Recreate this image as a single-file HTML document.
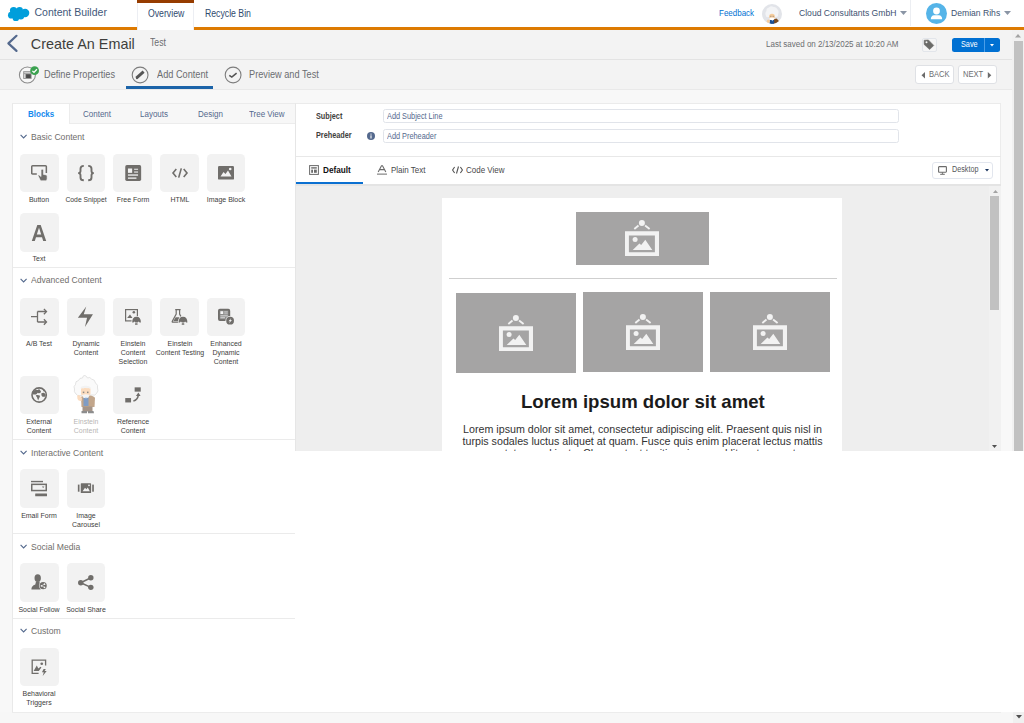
<!DOCTYPE html>
<html><head><meta charset="utf-8"><style>
html,body{margin:0;padding:0;}
body{width:1024px;height:723px;overflow:hidden;position:relative;background:#f8f8f8;font-family:"Liberation Sans", sans-serif;}
div,svg{font-family:"Liberation Sans", sans-serif;}
</style></head><body>
<div style="position:absolute;left:0px;top:0px;width:1024px;height:27px;background:#fff"></div>
<div style="position:absolute;left:0px;top:27px;width:1024px;height:3px;background:#dd7a01"></div>
<svg style="position:absolute;left:0px;top:0px;overflow:visible;" width="40" height="28" viewBox="0 0 40 28"><g fill="#009edb"><circle cx="13.6" cy="10.6" r="3.7"/><circle cx="19.6" cy="10.3" r="3.3"/><circle cx="25.1" cy="13" r="4.2"/><circle cx="11.4" cy="15.2" r="3.4"/><circle cx="15.9" cy="17.9" r="3.2"/><circle cx="20.8" cy="15.8" r="3.6"/><rect x="12" y="11" width="13" height="6"/></g></svg>
<div style="position:absolute;left:34.50px;top:6.00px;font-size:10.5px;line-height:12.6px;color:#3f587a;font-weight:400;white-space:nowrap;transform-origin:0 0;">Content Builder</div>
<div style="position:absolute;left:137px;top:0px;width:57px;height:30px;background:#fff;border-left:1px solid #eceef3;border-right:1px solid #eceef3;box-sizing:border-box"></div>
<div style="position:absolute;left:137px;top:0px;width:57px;height:2.6px;background:#963c00"></div>
<div style="position:absolute;left:148.00px;top:8.00px;font-size:10.0px;line-height:12.0px;color:#2f4a6e;font-weight:400;white-space:nowrap;transform:scaleX(0.87);transform-origin:0 0;">Overview</div>
<div style="position:absolute;left:204.50px;top:8.00px;font-size:10.0px;line-height:12.0px;color:#2f4a6e;font-weight:400;white-space:nowrap;transform:scaleX(0.87);transform-origin:0 0;">Recycle Bin</div>
<div style="position:absolute;left:719.00px;top:8.00px;font-size:9.195px;line-height:11.034px;color:#0070d2;font-weight:400;white-space:nowrap;transform:scaleX(0.87);transform-origin:0 0;">Feedback</div>
<svg style="position:absolute;left:762px;top:3.5px;overflow:visible;" width="20" height="20" viewBox="0 0 20 20"><defs><clipPath id="ec"><circle cx="10" cy="10" r="10"/></clipPath></defs>
<circle cx="10" cy="10" r="10" fill="#e2e4e9"/>
<g clip-path="url(#ec)">
<path d="M4 12 Q2.5 9 4.5 7 Q4 4 7 3.5 Q9 1.5 11.5 3 Q14.5 2.5 15.5 5.5 Q17.5 7.5 16 10.5 Q16.5 13 14 13 L6 13 Q4 13.5 4 12Z" fill="#f3f4f6"/>
<path d="M11 15.5 L14.5 14.5 Q17 16 17.5 19 L16 21 L11 21Z" fill="#7b4a20"/>
<path d="M7.5 21 L7.8 16 L12 15.5 L12.3 21Z" fill="#1d4f91"/>
<path d="M9.8 16 L10.4 17.5 L11 16Z" fill="#9cc3ec"/>
<ellipse cx="10" cy="12.6" rx="2.9" ry="2.9" fill="#f6cc9c"/>
<path d="M7.4 14 Q10 13 12.6 14 L12 15.8 Q10 16.5 8 15.8Z" fill="#ffffff"/>
<rect x="8.4" y="11.8" width="0.9" height="0.9" fill="#6d6d6d"/><rect x="10.7" y="11.8" width="0.9" height="0.9" fill="#6d6d6d"/>
<ellipse cx="6.3" cy="17.3" rx="1.5" ry="1.8" fill="#f6cc9c"/>
</g></svg>
<div style="position:absolute;left:798.70px;top:7.00px;font-size:9.885px;line-height:11.862px;color:#3d5170;font-weight:400;white-space:nowrap;transform:scaleX(0.87);transform-origin:0 0;">Cloud Consultants GmbH</div>
<svg style="position:absolute;left:900px;top:11px;overflow:visible;" width="7" height="4" viewBox="0 0 7 4"><path d="M0 0 L7 0 L3.5 4Z" fill="#8a95a5"/></svg>
<div style="position:absolute;left:910px;top:0px;width:1px;height:26px;background:#eceef2"></div>
<svg style="position:absolute;left:926px;top:3px;overflow:visible;" width="21" height="21" viewBox="0 0 21 21"><circle cx="10.5" cy="10.5" r="10.5" fill="#55b4e8"/><circle cx="10.5" cy="8" r="3.4" fill="#fff"/><path d="M4.8 16.2 Q5 12.5 8 12.2 L13 12.2 Q16 12.5 16.2 16.2 Z" fill="#fff"/></svg>
<div style="position:absolute;left:950.60px;top:7.00px;font-size:9.885px;line-height:11.862px;color:#3d5170;font-weight:400;white-space:nowrap;transform:scaleX(0.87);transform-origin:0 0;">Demian Rihs</div>
<svg style="position:absolute;left:1003.5px;top:11px;overflow:visible;" width="7" height="4" viewBox="0 0 7 4"><path d="M0 0 L7 0 L3.5 4Z" fill="#8a95a5"/></svg>
<div style="position:absolute;left:0px;top:30px;width:1012px;height:29px;background:#f3f3f3"></div>
<div style="position:absolute;left:0px;top:59px;width:1013.5px;height:1px;background:#e3e3e3"></div>
<svg style="position:absolute;left:7px;top:35px;overflow:visible;" width="12" height="18" viewBox="0 0 12 18"><path d="M9.5 0.8 L1.4 8.4 L9.5 15.9" fill="none" stroke="#54698d" stroke-width="2.2" stroke-linecap="round" stroke-linejoin="round"/></svg>
<div style="position:absolute;left:30.80px;top:36.00px;font-size:14.4px;line-height:17.28px;color:#3e3e3c;font-weight:400;white-space:nowrap;transform-origin:0 0;">Create An Email</div>
<div style="position:absolute;left:150.30px;top:37.00px;font-size:10.0px;line-height:12.0px;color:#6b6d70;font-weight:400;white-space:nowrap;transform:scaleX(0.87);transform-origin:0 0;">Test</div>
<div style="position:absolute;left:765.50px;top:39.00px;font-size:9.195px;line-height:11.034px;color:#6b6d70;font-weight:400;white-space:nowrap;transform:scaleX(0.87);transform-origin:0 0;">Last saved on 2/13/2025 at 10:20 AM</div>
<div style="position:absolute;left:922px;top:38px;width:14.5px;height:13.8px;background:#f5f5f5;border:1px solid #e2e5ea;border-radius:2px;box-sizing:border-box"></div>
<svg style="position:absolute;left:923px;top:39px;overflow:visible;" width="12" height="12" viewBox="0 0 12 12"><path d="M1.1 1.2 L5.4 0.9 L10.8 6.4 L6.6 10.6 L1.1 5.4 Z" fill="#6b6b68" stroke="#6b6b68" stroke-width="0.5" stroke-linejoin="round"/><circle cx="3.5" cy="3.3" r="1" fill="#f5f5f5"/></svg>
<div style="position:absolute;left:951.5px;top:37.9px;width:48px;height:13.8px;background:#0070d2;border-radius:2.5px"></div>
<div style="position:absolute;left:984.3px;top:37.9px;width:0.8px;height:13.8px;background:#4a9ee8"></div>
<div style="position:absolute;left:960.50px;top:39.00px;font-size:8.391px;line-height:10.069px;color:#fff;font-weight:400;white-space:nowrap;transform:scaleX(0.87);transform-origin:0 0;">Save</div>
<svg style="position:absolute;left:990.3px;top:44px;overflow:visible;" width="4" height="2.4" viewBox="0 0 4 2.4"><path d="M0 0 L4 0 L2 2.4Z" fill="#fff"/></svg>
<div style="position:absolute;left:0px;top:60px;width:1012px;height:29px;background:#f3f3f3"></div>
<div style="position:absolute;left:0px;top:88.8px;width:1013.5px;height:1.4px;background:#e9e9e9"></div>
<svg style="position:absolute;left:18px;top:66px;overflow:visible;" width="19" height="19" viewBox="0 0 19 19"><circle cx="9.4" cy="9" r="8" fill="#f7f7f7" stroke="#8c8c8c" stroke-width="1.1"/><rect x="5.2" y="5.2" width="8.4" height="7.7" fill="#8f8f8f"/><rect x="6.2" y="6.3" width="6.4" height="1" fill="#e6e6e6"/><rect x="6.2" y="8.1" width="1.1" height="3.9" fill="#e6e6e6"/><rect x="8.1" y="8.3" width="4.6" height="3.7" fill="#4a4a4a"/></svg>
<svg style="position:absolute;left:30px;top:66px;overflow:visible;" width="10" height="10" viewBox="0 0 10 10"><circle cx="4.6" cy="4.7" r="4.4" fill="#3ba250"/><path d="M2.4 4.9 L4 6.4 L6.9 3.3" fill="none" stroke="#fff" stroke-width="1.3"/></svg>
<div style="position:absolute;left:43.80px;top:68.00px;font-size:10.575px;line-height:12.69px;color:#6b6d70;font-weight:400;white-space:nowrap;transform:scaleX(0.87);transform-origin:0 0;">Define Properties</div>
<svg style="position:absolute;left:131px;top:66px;overflow:visible;" width="18" height="18" viewBox="0 0 18 18"><circle cx="9.1" cy="9" r="7.9" fill="none" stroke="#7d7d7d" stroke-width="1.1"/><path d="M5.3 12.2 L12.6 5.6" stroke="#555" stroke-width="3" /><path d="M4.9 13.2 L5.3 11.4 L6.6 12.7Z" fill="#555"/></svg>
<div style="position:absolute;left:156.50px;top:68.00px;font-size:10.575px;line-height:12.69px;color:#6b6d70;font-weight:400;white-space:nowrap;transform:scaleX(0.87);transform-origin:0 0;">Add Content</div>
<div style="position:absolute;left:126px;top:86px;width:87px;height:3px;background:#1b63a8"></div>
<svg style="position:absolute;left:224px;top:66px;overflow:visible;" width="18" height="18" viewBox="0 0 18 18"><circle cx="9.1" cy="9" r="7.9" fill="none" stroke="#7d7d7d" stroke-width="1.1"/><path d="M5.3 9.3 L7.8 11.1 L12.6 7.1" fill="none" stroke="#555" stroke-width="1.6"/></svg>
<div style="position:absolute;left:249.20px;top:68.00px;font-size:10.575px;line-height:12.69px;color:#6b6d70;font-weight:400;white-space:nowrap;transform:scaleX(0.87);transform-origin:0 0;">Preview and Test</div>
<div style="position:absolute;left:914.5px;top:65.3px;width:39px;height:18.8px;background:#fff;border:1px solid #dfe1e5;border-radius:3px;box-sizing:border-box"></div>
<svg style="position:absolute;left:921px;top:71.5px;overflow:visible;" width="5" height="7" viewBox="0 0 5 7"><path d="M4 0 L4 6.5 L0.5 3.25Z" fill="#6b6b6b"/></svg>
<div style="position:absolute;left:929.00px;top:69.00px;font-size:8.736px;line-height:10.483px;color:#6b6d70;font-weight:400;white-space:nowrap;transform:scaleX(0.87);transform-origin:0 0;">BACK</div>
<div style="position:absolute;left:958px;top:65.3px;width:38.6px;height:18.8px;background:#fff;border:1px solid #dfe1e5;border-radius:3px;box-sizing:border-box"></div>
<div style="position:absolute;left:962.70px;top:69.00px;font-size:8.736px;line-height:10.483px;color:#6b6d70;font-weight:400;white-space:nowrap;transform:scaleX(0.87);transform-origin:0 0;">NEXT</div>
<svg style="position:absolute;left:986.5px;top:71.5px;overflow:visible;" width="5" height="7" viewBox="0 0 5 7"><path d="M0.8 0 L0.8 6.5 L4.3 3.25Z" fill="#6b6b6b"/></svg>
<div style="position:absolute;left:0px;top:90px;width:1012px;height:633px;background:#f8f8f8"></div>
<div style="position:absolute;left:1012px;top:30px;width:12px;height:421px;background:#f1f1f1"></div>
<div style="position:absolute;left:1014px;top:41px;width:8.8px;height:409.5px;background:#c1c1c1"></div>
<svg style="position:absolute;left:1015px;top:34px;overflow:visible;" width="6" height="4" viewBox="0 0 6 4"><path d="M0 3.5 L6 3.5 L3 0Z" fill="#a3a3a3"/></svg>
<div style="position:absolute;left:12px;top:103px;width:284px;height:609px;background:#fff;border-left:1px solid #e9e9e9;border-top:1px solid #ebebeb;box-sizing:border-box"></div>
<div style="position:absolute;left:68.5px;top:104px;width:226.5px;height:19.6px;background:#f7f7f7;border-left:1px solid #ececec;border-bottom:1px solid #ececec;box-sizing:border-box"></div>
<div style="position:absolute;left:27.80px;top:109.00px;font-size:9.195px;line-height:11.034px;color:#1589ee;font-weight:700;white-space:nowrap;transform:scaleX(0.87);transform-origin:0 0;">Blocks</div>
<div style="position:absolute;left:83.00px;top:109.00px;font-size:9.195px;line-height:11.034px;color:#54698d;font-weight:400;white-space:nowrap;transform:scaleX(0.87);transform-origin:0 0;">Content</div>
<div style="position:absolute;left:139.70px;top:109.00px;font-size:9.195px;line-height:11.034px;color:#54698d;font-weight:400;white-space:nowrap;transform:scaleX(0.87);transform-origin:0 0;">Layouts</div>
<div style="position:absolute;left:197.80px;top:109.00px;font-size:9.195px;line-height:11.034px;color:#54698d;font-weight:400;white-space:nowrap;transform:scaleX(0.87);transform-origin:0 0;">Design</div>
<div style="position:absolute;left:249.40px;top:109.00px;font-size:9.195px;line-height:11.034px;color:#54698d;font-weight:400;white-space:nowrap;transform:scaleX(0.87);transform-origin:0 0;">Tree View</div>
<svg style="position:absolute;left:19.7px;top:134.3px;overflow:visible;" width="8" height="6" viewBox="0 0 8 6"><path d="M0.6 0.8 L3.6 4 L6.6 0.8" fill="none" stroke="#54698d" stroke-width="1.1"/></svg>
<div style="position:absolute;left:31.00px;top:131.00px;font-size:9.885px;line-height:11.862px;color:#706e6b;font-weight:400;white-space:nowrap;transform:scaleX(0.87);transform-origin:0 0;">Basic Content</div>
<div style="position:absolute;left:20px;top:153.6px;width:38.7px;height:38.7px;background:#f2f2f2;border-radius:4.5px"></div>
<svg style="position:absolute;left:31.35px;top:164.95px;overflow:visible;" width="16" height="16" viewBox="0 0 16 16"><path d="M5.8 9.05 L1.6 9.05 Q0.75 9.05 0.75 8.2 L0.75 1.6 Q0.75 0.85 1.6 0.85 L14.5 0.85 Q15.35 0.85 15.35 1.6 L15.35 8" fill="none" stroke="#706e6b" stroke-width="1.5"/><path d="M10.05 5.4 Q10.05 4.2 11.25 4.2 Q12.45 4.2 12.45 5.4 L12.45 9.4 L15.2 9.9 Q16.1 10.1 16.1 11 L16.1 14 Q16 15.75 14.6 15.75 L10.2 15.75 Q9.5 15.75 9.2 15 L7 10.6 Q6.9 10 7.6 10 Q8.6 10.2 10.05 11.6 Z" fill="#706e6b" stroke="#f2f2f2" stroke-width="0.6"/></svg>
<div style="position:absolute;left:-5.65px;top:195.00px;width:90px;text-align:center;font-size:8.046px;line-height:9.655px;color:#3e3e3c;font-weight:400;white-space:nowrap;transform:scaleX(0.87);transform-origin:50% 0;">Button</div>
<div style="position:absolute;left:66.8px;top:153.6px;width:38.7px;height:38.7px;background:#f2f2f2;border-radius:4.5px"></div>
<svg style="position:absolute;left:78.15px;top:164.95px;overflow:visible;" width="16" height="16" viewBox="0 0 16 16"><path d="M5.8 0.9 Q2.5 0.9 2.5 3.8 L2.5 5.9 Q2.5 8 0.2 8.1 Q2.5 8.2 2.5 10.3 L2.5 12.4 Q2.5 15.3 5.8 15.3" fill="none" stroke="#706e6b" stroke-width="1.9"/><path d="M10.2 0.9 Q13.5 0.9 13.5 3.8 L13.5 5.9 Q13.5 8 15.8 8.1 Q13.5 8.2 13.5 10.3 L13.5 12.4 Q13.5 15.3 10.2 15.3" fill="none" stroke="#706e6b" stroke-width="1.9"/></svg>
<div style="position:absolute;left:41.15px;top:195.00px;width:90px;text-align:center;font-size:7.816px;line-height:9.379px;color:#3e3e3c;font-weight:400;white-space:nowrap;transform:scaleX(0.87);transform-origin:50% 0;">Code Snippet</div>
<div style="position:absolute;left:113.4px;top:153.6px;width:38.7px;height:38.7px;background:#f2f2f2;border-radius:4.5px"></div>
<svg style="position:absolute;left:124.75px;top:164.95px;overflow:visible;" width="16" height="16" viewBox="0 0 16 16"><rect x="0.25" y="0.05" width="15.9" height="15.9" rx="1.6" fill="#706e6b"/><rect x="2.95" y="3.5" width="4.2" height="4.35" fill="#f2f2f2"/><rect x="9.1" y="3.7" width="3.95" height="1.2" fill="#dcdcdc"/><rect x="9.1" y="6.4" width="3.95" height="1.3" fill="#dcdcdc"/><rect x="2.95" y="9.25" width="10.1" height="1.6" fill="#dcdcdc"/><rect x="2.95" y="12.35" width="8.5" height="1.6" fill="#dcdcdc"/></svg>
<div style="position:absolute;left:87.75px;top:195.00px;width:90px;text-align:center;font-size:8.046px;line-height:9.655px;color:#3e3e3c;font-weight:400;white-space:nowrap;transform:scaleX(0.87);transform-origin:50% 0;">Free Form</div>
<div style="position:absolute;left:160.2px;top:153.6px;width:38.7px;height:38.7px;background:#f2f2f2;border-radius:4.5px"></div>
<svg style="position:absolute;left:171.55px;top:164.95px;overflow:visible;" width="16" height="16" viewBox="0 0 16 16"><path d="M4.3 4 L1 8 L4.3 12" fill="none" stroke="#706e6b" stroke-width="1.6"/><path d="M11.7 4 L15 8 L11.7 12" fill="none" stroke="#706e6b" stroke-width="1.6"/><path d="M9.3 3.4 L6.7 12.6" fill="none" stroke="#706e6b" stroke-width="1.6"/></svg>
<div style="position:absolute;left:134.55px;top:195.00px;width:90px;text-align:center;font-size:8.046px;line-height:9.655px;color:#3e3e3c;font-weight:400;white-space:nowrap;transform:scaleX(0.87);transform-origin:50% 0;">HTML</div>
<div style="position:absolute;left:206.6px;top:153.6px;width:38.7px;height:38.7px;background:#f2f2f2;border-radius:4.5px"></div>
<svg style="position:absolute;left:217.95px;top:164.95px;overflow:visible;" width="16" height="16" viewBox="0 0 16 16"><rect x="0" y="1" width="16" height="13.6" rx="1.2" fill="#706e6b"/><path d="M2.5 11.5 L5.5 7 L7.5 9 L10 5.5 L13.5 11.5 Z" fill="#f2f2f2"/><circle cx="12.2" cy="4" r="1.3" fill="#f2f2f2"/></svg>
<div style="position:absolute;left:180.95px;top:195.00px;width:90px;text-align:center;font-size:8.046px;line-height:9.655px;color:#3e3e3c;font-weight:400;white-space:nowrap;transform:scaleX(0.87);transform-origin:50% 0;">Image Block</div>
<div style="position:absolute;left:20px;top:213.2px;width:38.7px;height:38.7px;background:#f2f2f2;border-radius:4.5px"></div>
<svg style="position:absolute;left:31.35px;top:224.55px;overflow:visible;" width="16" height="16" viewBox="0 0 16 16"><path d="M0.8 16 L6.3 0 L9.7 0 L15.2 16 L12.2 16 L11 12.3 L5 12.3 L3.8 16 Z M5.8 9.6 L10.2 9.6 L8 2.8 Z" fill="#706e6b" fill-rule="evenodd"/></svg>
<div style="position:absolute;left:-5.65px;top:254.00px;width:90px;text-align:center;font-size:8.046px;line-height:9.655px;color:#3e3e3c;font-weight:400;white-space:nowrap;transform:scaleX(0.87);transform-origin:50% 0;">Text</div>
<div style="position:absolute;left:13px;top:267.0px;width:282px;height:1px;background:#ebebeb"></div>
<svg style="position:absolute;left:19.7px;top:277.7px;overflow:visible;" width="8" height="6" viewBox="0 0 8 6"><path d="M0.6 0.8 L3.6 4 L6.6 0.8" fill="none" stroke="#54698d" stroke-width="1.1"/></svg>
<div style="position:absolute;left:31.00px;top:274.00px;font-size:9.885px;line-height:11.862px;color:#706e6b;font-weight:400;white-space:nowrap;transform:scaleX(0.87);transform-origin:0 0;">Advanced Content</div>
<div style="position:absolute;left:20px;top:297.5px;width:38.7px;height:38.7px;background:#f2f2f2;border-radius:4.5px"></div>
<svg style="position:absolute;left:31.35px;top:308.85px;overflow:visible;" width="16" height="16" viewBox="0 0 16 16"><path d="M0 7.7 L6.5 7.7 M6.5 2.5 L6.5 13 M6.5 2.5 L15 2.5 M6.5 13 L15 13" fill="none" stroke="#706e6b" stroke-width="1.3"/><path d="M12.9 0 L15.5 2.5 L12.9 5.3 M12.9 10.3 L15.5 13 L12.9 15.8" fill="none" stroke="#706e6b" stroke-width="1.3"/></svg>
<div style="position:absolute;left:-5.65px;top:339.00px;width:90px;text-align:center;font-size:8.046px;line-height:9.655px;color:#3e3e3c;font-weight:400;white-space:nowrap;transform:scaleX(0.87);transform-origin:50% 0;">A/B Test</div>
<div style="position:absolute;left:66.8px;top:297.5px;width:38.7px;height:38.7px;background:#f2f2f2;border-radius:4.5px"></div>
<svg style="position:absolute;left:78.15px;top:308.85px;overflow:visible;" width="16" height="16" viewBox="0 0 16 16"><path d="M8.25 -2.45 L5.75 5.35 L14.95 5.35 L6.95 17.95 L9.05 8.75 L-0.15 8.75 Z" fill="#706e6b"/></svg>
<div style="position:absolute;left:41.15px;top:339.00px;width:90px;text-align:center;font-size:8.046px;line-height:9.655px;color:#3e3e3c;font-weight:400;white-space:nowrap;transform:scaleX(0.87);transform-origin:50% 0;">Dynamic</div>
<div style="position:absolute;left:41.15px;top:348.00px;width:90px;text-align:center;font-size:8.046px;line-height:9.655px;color:#3e3e3c;font-weight:400;white-space:nowrap;transform:scaleX(0.87);transform-origin:50% 0;">Content</div>
<div style="position:absolute;left:113.4px;top:297.5px;width:38.7px;height:38.7px;background:#f2f2f2;border-radius:4.5px"></div>
<svg style="position:absolute;left:124.75px;top:308.85px;overflow:visible;" width="16" height="16" viewBox="0 0 16 16"><rect x="0.6" y="0.6" width="11.8" height="11.3" fill="none" stroke="#706e6b" stroke-width="1.2"/><path d="M2.1 9 L5 5.4 L7.5 9Z" fill="#706e6b"/><circle cx="8.85" cy="3.3" r="1.3" fill="#706e6b"/><path d="M6.4 13.8 Q6.4 7 11.6 7 Q16.6 7 16.6 13.8Z" fill="#f2f2f2"/><path d="M7.2 13.6 Q7.2 7.8 11.5 7.8 Q15.9 7.8 15.9 13.6 L14.6 13.6 L13.6 12.6 L12.6 13.6 L10.4 13.6 L9.4 12.6 L8.4 13.6Z" fill="#706e6b"/><rect x="10" y="14.2" width="2.6" height="1.5" rx="0.5" fill="#706e6b"/></svg>
<div style="position:absolute;left:87.75px;top:339.00px;width:90px;text-align:center;font-size:8.046px;line-height:9.655px;color:#3e3e3c;font-weight:400;white-space:nowrap;transform:scaleX(0.87);transform-origin:50% 0;">Einstein</div>
<div style="position:absolute;left:87.75px;top:348.00px;width:90px;text-align:center;font-size:8.046px;line-height:9.655px;color:#3e3e3c;font-weight:400;white-space:nowrap;transform:scaleX(0.87);transform-origin:50% 0;">Content</div>
<div style="position:absolute;left:87.75px;top:357.00px;width:90px;text-align:center;font-size:8.046px;line-height:9.655px;color:#3e3e3c;font-weight:400;white-space:nowrap;transform:scaleX(0.87);transform-origin:50% 0;">Selection</div>
<div style="position:absolute;left:160.2px;top:297.5px;width:38.7px;height:38.7px;background:#f2f2f2;border-radius:4.5px"></div>
<svg style="position:absolute;left:171.55px;top:308.85px;overflow:visible;" width="16" height="16" viewBox="0 0 16 16"><path d="M3.2 0.6 L8.6 0.6 M4.2 0.6 L4.2 5 L0.3 12.2 Q-0.2 13.2 0.9 13.2 L6.5 13.2 M7.6 0.6 L7.6 5 L9 7.6" fill="none" stroke="#706e6b" stroke-width="1.2"/><path d="M1.4 12 L3.6 8.2 L7.6 8.2 L6.6 12Z" fill="#706e6b"/><path d="M5.9 13.8 Q5.9 7 11 7 Q16.1 7 16.1 13.8Z" fill="#f2f2f2"/><path d="M6.6 13.6 Q6.6 7.8 11 7.8 Q15.4 7.8 15.4 13.6 L14.1 13.6 L13.1 12.6 L12.1 13.6 L9.9 13.6 L8.9 12.6 L7.9 13.6Z" fill="#706e6b"/><rect x="9.7" y="14.2" width="2.6" height="1.5" rx="0.5" fill="#706e6b"/></svg>
<div style="position:absolute;left:134.55px;top:339.00px;width:90px;text-align:center;font-size:8.046px;line-height:9.655px;color:#3e3e3c;font-weight:400;white-space:nowrap;transform:scaleX(0.87);transform-origin:50% 0;">Einstein</div>
<div style="position:absolute;left:134.55px;top:348.00px;width:90px;text-align:center;font-size:8.046px;line-height:9.655px;color:#3e3e3c;font-weight:400;white-space:nowrap;transform:scaleX(0.87);transform-origin:50% 0;">Content Testing</div>
<div style="position:absolute;left:206.6px;top:297.5px;width:38.7px;height:38.7px;background:#f2f2f2;border-radius:4.5px"></div>
<svg style="position:absolute;left:217.95px;top:308.85px;overflow:visible;" width="16" height="16" viewBox="0 0 16 16"><rect x="0.9" y="0.7" width="10.4" height="10.4" rx="1" fill="#8c8c8a" stroke="#706e6b" stroke-width="1.8"/><rect x="2.4" y="2.2" width="2.8" height="2.8" fill="#f6f6f6"/><rect x="6.2" y="2.4" width="3.6" height="1.1" fill="#cfcfcf"/><rect x="6.2" y="4.2" width="3.6" height="1.1" fill="#bdbdbd"/><rect x="2.4" y="6.3" width="7.4" height="1.1" fill="#d6d6d6"/><rect x="2.4" y="8.2" width="4.6" height="1.1" fill="#d6d6d6"/><circle cx="12.1" cy="11.7" r="4.7" fill="#f2f2f2"/><circle cx="12.1" cy="11.7" r="3.9" fill="#706e6b"/><path d="M13.3 9 L10.5 12.3 L12 12.3 L11 14.6 L13.9 11.1 L12.4 11.1Z" fill="#f2f2f2"/></svg>
<div style="position:absolute;left:180.95px;top:339.00px;width:90px;text-align:center;font-size:8.046px;line-height:9.655px;color:#3e3e3c;font-weight:400;white-space:nowrap;transform:scaleX(0.87);transform-origin:50% 0;">Enhanced</div>
<div style="position:absolute;left:180.95px;top:348.00px;width:90px;text-align:center;font-size:8.046px;line-height:9.655px;color:#3e3e3c;font-weight:400;white-space:nowrap;transform:scaleX(0.87);transform-origin:50% 0;">Dynamic</div>
<div style="position:absolute;left:180.95px;top:357.00px;width:90px;text-align:center;font-size:8.046px;line-height:9.655px;color:#3e3e3c;font-weight:400;white-space:nowrap;transform:scaleX(0.87);transform-origin:50% 0;">Content</div>
<div style="position:absolute;left:20px;top:375.5px;width:38.7px;height:38.7px;background:#f2f2f2;border-radius:4.5px"></div>
<svg style="position:absolute;left:31.35px;top:386.85px;overflow:visible;" width="16" height="16" viewBox="0 0 16 16"><circle cx="8.15" cy="8" r="7.15" fill="none" stroke="#706e6b" stroke-width="1.6"/><g fill="#706e6b"><path d="M1.3 7.2 L1.5 4.6 Q2.6 3.1 4.5 3 L7.4 2.9 L7.6 1.4 L9.2 3.2 L10 4.6 L9.3 6.1 L7.6 6.3 L6.7 5.7 Q5.9 7.1 5 7.4 Q3 7.5 1.3 7.2Z"/><path d="M4.8 8.3 Q7 7.8 8.8 8.6 Q9.3 10 8.2 11 Q7.6 12.2 7.2 13.4 Q6.3 11.6 6 10.3 Q5 9.5 4.8 8.3Z"/><path d="M10.2 6.4 Q11.8 5.5 13.4 5.9 L14.8 8 L13.8 9.7 Q12 9.9 11.2 9.5 Q10.4 8.1 10.2 6.4Z"/><path d="M11.5 2.2 L13.6 3.6 L12.6 4.4 Z"/></g></svg>
<div style="position:absolute;left:-5.65px;top:417.00px;width:90px;text-align:center;font-size:8.046px;line-height:9.655px;color:#3e3e3c;font-weight:400;white-space:nowrap;transform:scaleX(0.87);transform-origin:50% 0;">External</div>
<div style="position:absolute;left:-5.65px;top:426.00px;width:90px;text-align:center;font-size:8.046px;line-height:9.655px;color:#3e3e3c;font-weight:400;white-space:nowrap;transform:scaleX(0.87);transform-origin:50% 0;">Content</div>
<div style="position:absolute;left:41.15px;top:417.00px;width:90px;text-align:center;font-size:8.046px;line-height:9.655px;color:#b8b6b4;font-weight:400;white-space:nowrap;transform:scaleX(0.87);transform-origin:50% 0;">Einstein</div>
<div style="position:absolute;left:41.15px;top:426.00px;width:90px;text-align:center;font-size:8.046px;line-height:9.655px;color:#b8b6b4;font-weight:400;white-space:nowrap;transform:scaleX(0.87);transform-origin:50% 0;">Content</div>
<div style="position:absolute;left:113.4px;top:375.5px;width:38.7px;height:38.7px;background:#f2f2f2;border-radius:4.5px"></div>
<svg style="position:absolute;left:124.75px;top:386.85px;overflow:visible;" width="16" height="16" viewBox="0 0 16 16"><rect x="0.25" y="11.05" width="5.8" height="4.4" fill="#706e6b"/><rect x="9.65" y="0.35" width="6.1" height="4.3" fill="#706e6b"/><path d="M8.4 14 Q12.6 13 13.3 8.4" fill="none" stroke="#706e6b" stroke-width="1.5"/><path d="M10.9 8.9 L13.4 5.6 L15.6 8.9Z" fill="#706e6b"/></svg>
<div style="position:absolute;left:87.75px;top:417.00px;width:90px;text-align:center;font-size:8.046px;line-height:9.655px;color:#3e3e3c;font-weight:400;white-space:nowrap;transform:scaleX(0.87);transform-origin:50% 0;">Reference</div>
<div style="position:absolute;left:87.75px;top:426.00px;width:90px;text-align:center;font-size:8.046px;line-height:9.655px;color:#3e3e3c;font-weight:400;white-space:nowrap;transform:scaleX(0.87);transform-origin:50% 0;">Content</div>
<div style="position:absolute;left:13px;top:439.1px;width:282px;height:1px;background:#ebebeb"></div>
<svg style="position:absolute;left:19.7px;top:450.09999999999997px;overflow:visible;" width="8" height="6" viewBox="0 0 8 6"><path d="M0.6 0.8 L3.6 4 L6.6 0.8" fill="none" stroke="#54698d" stroke-width="1.1"/></svg>
<div style="position:absolute;left:31.00px;top:447.00px;font-size:9.885px;line-height:11.862px;color:#706e6b;font-weight:400;white-space:nowrap;transform:scaleX(0.87);transform-origin:0 0;">Interactive Content</div>
<div style="position:absolute;left:20px;top:469px;width:38.7px;height:38.7px;background:#f2f2f2;border-radius:4.5px"></div>
<svg style="position:absolute;left:31.35px;top:480.35px;overflow:visible;" width="16" height="16" viewBox="0 0 16 16"><rect x="0" y="0.85" width="12" height="1.4" fill="#706e6b"/><rect x="0.75" y="4.35" width="14.5" height="6.2" fill="none" stroke="#706e6b" stroke-width="1.5"/><path d="M10.9 6.6 L13.4 6.6 L12.15 8Z" fill="#706e6b"/><rect x="4.2" y="13.4" width="11.8" height="2.9" rx="0.4" fill="#706e6b"/></svg>
<div style="position:absolute;left:-5.65px;top:511.00px;width:90px;text-align:center;font-size:8.046px;line-height:9.655px;color:#3e3e3c;font-weight:400;white-space:nowrap;transform:scaleX(0.87);transform-origin:50% 0;">Email Form</div>
<div style="position:absolute;left:66.8px;top:469px;width:38.7px;height:38.7px;background:#f2f2f2;border-radius:4.5px"></div>
<svg style="position:absolute;left:78.15px;top:480.35px;overflow:visible;" width="16" height="16" viewBox="0 0 16 16"><rect x="-0.15" y="4.6" width="1.65" height="7.1" fill="#706e6b"/><rect x="14.2" y="4.6" width="1.65" height="7.1" fill="#706e6b"/><rect x="2.75" y="3.35" width="10.35" height="9.65" rx="0.6" fill="#706e6b"/><path d="M4.6 11.3 L7 7.8 L8.4 9.3 L9.8 7.6 L11.8 11.3Z" fill="#f2f2f2"/><circle cx="11" cy="5.3" r="0.9" fill="#f2f2f2"/></svg>
<div style="position:absolute;left:41.15px;top:511.00px;width:90px;text-align:center;font-size:8.046px;line-height:9.655px;color:#3e3e3c;font-weight:400;white-space:nowrap;transform:scaleX(0.87);transform-origin:50% 0;">Image</div>
<div style="position:absolute;left:41.15px;top:520.00px;width:90px;text-align:center;font-size:8.046px;line-height:9.655px;color:#3e3e3c;font-weight:400;white-space:nowrap;transform:scaleX(0.87);transform-origin:50% 0;">Carousel</div>
<div style="position:absolute;left:13px;top:533.1px;width:282px;height:1px;background:#ebebeb"></div>
<svg style="position:absolute;left:19.7px;top:543.9px;overflow:visible;" width="8" height="6" viewBox="0 0 8 6"><path d="M0.6 0.8 L3.6 4 L6.6 0.8" fill="none" stroke="#54698d" stroke-width="1.1"/></svg>
<div style="position:absolute;left:31.00px;top:541.00px;font-size:9.885px;line-height:11.862px;color:#706e6b;font-weight:400;white-space:nowrap;transform:scaleX(0.87);transform-origin:0 0;">Social Media</div>
<div style="position:absolute;left:20px;top:562.9px;width:38.7px;height:38.7px;background:#f2f2f2;border-radius:4.5px"></div>
<svg style="position:absolute;left:31.35px;top:574.25px;overflow:visible;" width="16" height="16" viewBox="0 0 16 16"><ellipse cx="6.7" cy="4.1" rx="3.2" ry="3.9" fill="#706e6b"/><path d="M0.4 15.45 Q0.3 11.8 4.3 10.4 L5 7.6 L8.4 7.6 L9 10.4 L9.6 15.45 Z" fill="#706e6b"/><circle cx="12.15" cy="11.7" r="4.2" fill="#f2f2f2"/><circle cx="12.15" cy="11.7" r="3.6" fill="#706e6b"/><circle cx="10.5" cy="11.8" r="0.85" fill="#f2f2f2"/><circle cx="13.5" cy="10.2" r="0.85" fill="#f2f2f2"/><circle cx="13.5" cy="13.3" r="0.85" fill="#f2f2f2"/><path d="M10.5 11.8 L13.5 10.2 M10.5 11.8 L13.5 13.3" stroke="#f2f2f2" stroke-width="0.6"/></svg>
<div style="position:absolute;left:-5.65px;top:605.00px;width:90px;text-align:center;font-size:8.046px;line-height:9.655px;color:#3e3e3c;font-weight:400;white-space:nowrap;transform:scaleX(0.87);transform-origin:50% 0;">Social Follow</div>
<div style="position:absolute;left:66.8px;top:562.9px;width:38.7px;height:38.7px;background:#f2f2f2;border-radius:4.5px"></div>
<svg style="position:absolute;left:78.15px;top:574.25px;overflow:visible;" width="16" height="16" viewBox="0 0 16 16"><circle cx="2.75" cy="8.75" r="2.7" fill="#706e6b"/><circle cx="12.85" cy="3.75" r="2.7" fill="#706e6b"/><circle cx="12.85" cy="13.35" r="2.7" fill="#706e6b"/><path d="M2.75 8.75 L12.85 3.75 M2.75 8.75 L12.85 13.35" stroke="#706e6b" stroke-width="1.5"/></svg>
<div style="position:absolute;left:41.15px;top:605.00px;width:90px;text-align:center;font-size:8.046px;line-height:9.655px;color:#3e3e3c;font-weight:400;white-space:nowrap;transform:scaleX(0.87);transform-origin:50% 0;">Social Share</div>
<div style="position:absolute;left:13px;top:618.1px;width:282px;height:1px;background:#ebebeb"></div>
<svg style="position:absolute;left:19.7px;top:628.1px;overflow:visible;" width="8" height="6" viewBox="0 0 8 6"><path d="M0.6 0.8 L3.6 4 L6.6 0.8" fill="none" stroke="#54698d" stroke-width="1.1"/></svg>
<div style="position:absolute;left:31.00px;top:625.00px;font-size:9.885px;line-height:11.862px;color:#706e6b;font-weight:400;white-space:nowrap;transform:scaleX(0.87);transform-origin:0 0;">Custom</div>
<div style="position:absolute;left:20px;top:647.8px;width:38.7px;height:38.7px;background:#f2f2f2;border-radius:4.5px"></div>
<svg style="position:absolute;left:31.35px;top:659.15px;overflow:visible;" width="16" height="16" viewBox="0 0 16 16"><path d="M7.6 14.3 L1.2 14.3 L1.2 1.2 L14.6 1.2 L14.6 6.4" fill="none" stroke="#706e6b" stroke-width="1.3"/><path d="M2.6 12 L5.8 6.6 L7.3 9.4 L9.6 7.8 L10.4 8.6 L7.8 12Z" fill="#706e6b"/><circle cx="10.75" cy="4.75" r="1.35" fill="#706e6b"/><path d="M12.6 9.9 L10.9 13.3 L12.8 13.3 L11.7 16.9 L15.7 12 L13.6 12 L14.8 9.9Z" fill="#706e6b"/></svg>
<div style="position:absolute;left:-5.65px;top:689.00px;width:90px;text-align:center;font-size:8.046px;line-height:9.655px;color:#3e3e3c;font-weight:400;white-space:nowrap;transform:scaleX(0.87);transform-origin:50% 0;">Behavioral</div>
<div style="position:absolute;left:-5.65px;top:698.00px;width:90px;text-align:center;font-size:8.046px;line-height:9.655px;color:#3e3e3c;font-weight:400;white-space:nowrap;transform:scaleX(0.87);transform-origin:50% 0;">Triggers</div>
<svg style="position:absolute;left:64px;top:370px;overflow:visible;" width="44" height="46" viewBox="0 0 44 46">
<path d="M12 24 Q9.5 22 10.5 19 Q9 16.5 11.5 14.5 Q11 11 14.5 10.5 Q15.5 7.5 18.5 8 Q19 5 21 5.5 Q23 6.5 23.5 8 Q26 6.5 27.5 9 Q31 9.5 31.5 13 Q34.5 15 33.5 18 Q35 21 32.5 23.5 Q31 26 28 25 L16 25.5 Q13 26 12 24Z" fill="#fafafa" stroke="#d9d9d9" stroke-width="0.7"/>
<path d="M17 27 L17.5 37 L30.5 37 L31 28 Q30 26 26 25.5 L20 25.5 Q17.5 26 17 27Z" fill="#c2a68b"/>
<path d="M19.5 26.5 L19.5 36 L24.5 36 L24.5 26.5Z" fill="#7f9cc4"/>
<path d="M18.5 36.5 L18.5 41.5 L28.5 41.5 L28.5 36.5Z" fill="#a49488"/>
<path d="M17.5 41 L23 41 L23 43.2 L17.5 43.2Z M24 41 L29.5 41 L30 43.2 L24 43.2Z" fill="#8d8d8d"/>
<path d="M17 18.5 Q21.5 17 26.5 18.5 L26.5 23.5 Q26 26.5 21.5 26.5 Q17 26.5 17 23.5Z" fill="#fbdcbf"/>
<path d="M16.5 18.8 Q18 17.5 19.5 18.5 Q21 17 23 18.3 Q25 17.3 26.8 19 L26.5 17 Q21.5 14.5 16.8 17Z" fill="#f2f2f2"/>
<rect x="18.8" y="21.6" width="1.5" height="1.5" fill="#8e8a86"/><rect x="23" y="21.6" width="1.5" height="1.5" fill="#8e8a86"/>
<path d="M18 25 Q21.5 23.5 25.5 25 L24.5 27.5 Q21.5 28.5 19 27.5Z" fill="#f4f4f4"/>
<path d="M21 27.2 L22 29 L23 27.2Z" fill="#b9d2ee"/>
<path d="M13.2 26 Q13.8 24.5 15.3 25.2 L18 28 L17.5 31 Q14.5 31.5 13.5 29Z" fill="#fbdcbf"/>
</svg>
<div style="position:absolute;left:295px;top:103px;width:706px;height:348px;background:#fff;border-left:1px solid #e6e6e6;border-top:1px solid #ebebeb;border-right:1px solid #ececec;box-sizing:border-box"></div>
<div style="position:absolute;left:315.90px;top:111.00px;font-size:8.391px;line-height:10.069px;color:#3e3e3c;font-weight:700;white-space:nowrap;transform:scaleX(0.87);transform-origin:0 0;">Subject</div>
<div style="position:absolute;left:315.60px;top:130.00px;font-size:8.391px;line-height:10.069px;color:#3e3e3c;font-weight:700;white-space:nowrap;transform:scaleX(0.87);transform-origin:0 0;">Preheader</div>
<svg style="position:absolute;left:367px;top:131.7px;overflow:visible;" width="8" height="8" viewBox="0 0 8 8"><circle cx="4" cy="4" r="4" fill="#54698d"/><rect x="3.45" y="3.3" width="1.1" height="3.2" fill="#fff"/><circle cx="4" cy="2.1" r="0.65" fill="#fff"/></svg>
<div style="position:absolute;left:383.4px;top:109.4px;width:516.1px;height:13.8px;border:1px solid #e1e4ea;border-radius:2.5px;box-sizing:border-box;background:#fff"></div>
<div style="position:absolute;left:383.4px;top:129.4px;width:516.1px;height:14px;border:1px solid #e1e4ea;border-radius:2.5px;box-sizing:border-box;background:#fff"></div>
<div style="position:absolute;left:387.00px;top:111.00px;font-size:8.448px;line-height:10.138px;color:#54698d;font-weight:400;white-space:nowrap;transform:scaleX(0.87);transform-origin:0 0;">Add Subject Line</div>
<div style="position:absolute;left:387.00px;top:131.00px;font-size:8.448px;line-height:10.138px;color:#54698d;font-weight:400;white-space:nowrap;transform:scaleX(0.87);transform-origin:0 0;">Add Preheader</div>
<div style="position:absolute;left:296px;top:156px;width:704.5px;height:1px;background:#e8e8e8"></div>
<svg style="position:absolute;left:309px;top:165px;overflow:visible;" width="10" height="10" viewBox="0 0 10 10"><rect x="0.6" y="0.6" width="8.8" height="8.8" fill="none" stroke="#6b6b6b" stroke-width="1"/><rect x="2.2" y="2.2" width="5.6" height="1.4" fill="#6b6b6b"/><rect x="2.2" y="4.6" width="1.8" height="3.2" fill="#6b6b6b"/><rect x="5" y="4.6" width="2.8" height="3.2" fill="#6b6b6b"/></svg>
<div style="position:absolute;left:322.80px;top:164.00px;font-size:9.425px;line-height:11.31px;color:#111111;font-weight:700;white-space:nowrap;transform:scaleX(0.87);transform-origin:0 0;">Default</div>
<svg style="position:absolute;left:377px;top:165px;overflow:visible;" width="10" height="10" viewBox="0 0 10 10"><path d="M1.2 7 L4.5 0.8 L5.5 0.8 L8.8 7 M2.6 4.6 L7.4 4.6" fill="none" stroke="#6b6b6b" stroke-width="1.1"/><rect x="0" y="8.6" width="10" height="1" fill="#6b6b6b"/></svg>
<div style="position:absolute;left:390.60px;top:165.00px;font-size:9.195px;line-height:11.034px;color:#48484a;font-weight:400;white-space:nowrap;transform:scaleX(0.87);transform-origin:0 0;">Plain Text</div>
<svg style="position:absolute;left:451.5px;top:166px;overflow:visible;" width="11" height="8" viewBox="0 0 11 8"><path d="M2.6 1 L0.6 4 L2.6 7 M8.4 1 L10.4 4 L8.4 7 M6.5 0.5 L4.5 7.5" fill="none" stroke="#555" stroke-width="1.1"/></svg>
<div style="position:absolute;left:465.80px;top:165.00px;font-size:9.195px;line-height:11.034px;color:#48484a;font-weight:400;white-space:nowrap;transform:scaleX(0.87);transform-origin:0 0;">Code View</div>
<div style="position:absolute;left:296px;top:184px;width:704.5px;height:1.5px;background:#e4e4e4"></div>
<div style="position:absolute;left:295.5px;top:181.7px;width:67.6px;height:1.9px;background:#0b70d1"></div>
<div style="position:absolute;left:931.7px;top:161.5px;width:61px;height:17.6px;border:1px solid #e2e6ee;border-radius:3px;box-sizing:border-box;background:#fff"></div>
<svg style="position:absolute;left:938.3px;top:165.5px;overflow:visible;" width="9" height="9" viewBox="0 0 9 9"><rect x="0.6" y="0.6" width="7.8" height="5.6" rx="0.6" fill="none" stroke="#6b6b6b" stroke-width="1.1"/><rect x="3.9" y="6.4" width="1.2" height="1.4" fill="#6b6b6b"/><rect x="2.2" y="7.8" width="4.6" height="1" fill="#6b6b6b"/></svg>
<div style="position:absolute;left:951.80px;top:165.00px;font-size:8.276px;line-height:9.931px;color:#54565a;font-weight:400;white-space:nowrap;transform:scaleX(0.87);transform-origin:0 0;">Desktop</div>
<svg style="position:absolute;left:985px;top:169px;overflow:visible;" width="4" height="3" viewBox="0 0 4 3"><path d="M0 0 L4 0 L2 2.6Z" fill="#16325c"/></svg>
<div style="position:absolute;left:296px;top:185.5px;width:693px;height:265.5px;background:#eeeeee"></div>
<div style="position:absolute;left:989px;top:185.5px;width:11.5px;height:265.5px;background:#f1f1f1"></div>
<div style="position:absolute;left:990.3px;top:196px;width:8.8px;height:114px;background:#c1c1c1"></div>
<svg style="position:absolute;left:992.5px;top:189.5px;overflow:visible;" width="5" height="3.5" viewBox="0 0 5 3.5"><path d="M0 3 L5 3 L2.5 0Z" fill="#a3a3a3"/></svg>
<svg style="position:absolute;left:992.3px;top:444.5px;overflow:visible;" width="5" height="3.5" viewBox="0 0 5 3.5"><path d="M0 0 L5 0 L2.5 3Z" fill="#505050"/></svg>
<div style="position:absolute;left:442px;top:198.4px;width:400.4px;height:252.6px;background:#fff;overflow:hidden"></div>
<div style="position:absolute;left:576px;top:211.8px;width:133.4px;height:53px;background:#a5a4a4"></div>
<svg style="position:absolute;left:625.2px;top:219.3px;overflow:visible;" width="35" height="38" viewBox="0 0 35 38"><path d="M9.3 10 L13.5 6.6 M20.1 6.6 L24.6 10" stroke="#f2f2f2" stroke-width="1.9"/><circle cx="16.9" cy="4.1" r="3" fill="#f2f2f2"/>
<path d="M0 12.2 L34 12.2 L34 37.1 L0 37.1Z M3.9 16.5 L3.9 33.2 L29.9 33.2 L29.9 16.5Z" fill="#f2f2f2" fill-rule="evenodd"/>
<path d="M7.7 31.1 L14.4 24.4 L16.2 25.9 L20.3 20.8 L27.3 31.1Z" fill="#f2f2f2"/><circle cx="10.1" cy="20.6" r="2.5" fill="#f2f2f2"/></svg>
<div style="position:absolute;left:448.5px;top:277.6px;width:388px;height:1px;background:#cfcfcf"></div>
<div style="position:absolute;left:456px;top:292.6px;width:120px;height:80px;background:#a5a4a4"></div>
<svg style="position:absolute;left:498.5px;top:313.6px;overflow:visible;" width="35" height="38" viewBox="0 0 35 38"><path d="M9.3 10 L13.5 6.6 M20.1 6.6 L24.6 10" stroke="#f2f2f2" stroke-width="1.9"/><circle cx="16.9" cy="4.1" r="3" fill="#f2f2f2"/>
<path d="M0 12.2 L34 12.2 L34 37.1 L0 37.1Z M3.9 16.5 L3.9 33.2 L29.9 33.2 L29.9 16.5Z" fill="#f2f2f2" fill-rule="evenodd"/>
<path d="M7.7 31.1 L14.4 24.4 L16.2 25.9 L20.3 20.8 L27.3 31.1Z" fill="#f2f2f2"/><circle cx="10.1" cy="20.6" r="2.5" fill="#f2f2f2"/></svg>
<div style="position:absolute;left:583px;top:292.2px;width:120px;height:80px;background:#a5a4a4"></div>
<svg style="position:absolute;left:625.5px;top:313.2px;overflow:visible;" width="35" height="38" viewBox="0 0 35 38"><path d="M9.3 10 L13.5 6.6 M20.1 6.6 L24.6 10" stroke="#f2f2f2" stroke-width="1.9"/><circle cx="16.9" cy="4.1" r="3" fill="#f2f2f2"/>
<path d="M0 12.2 L34 12.2 L34 37.1 L0 37.1Z M3.9 16.5 L3.9 33.2 L29.9 33.2 L29.9 16.5Z" fill="#f2f2f2" fill-rule="evenodd"/>
<path d="M7.7 31.1 L14.4 24.4 L16.2 25.9 L20.3 20.8 L27.3 31.1Z" fill="#f2f2f2"/><circle cx="10.1" cy="20.6" r="2.5" fill="#f2f2f2"/></svg>
<div style="position:absolute;left:710px;top:292.2px;width:120px;height:80px;background:#a5a4a4"></div>
<svg style="position:absolute;left:752.5px;top:313.2px;overflow:visible;" width="35" height="38" viewBox="0 0 35 38"><path d="M9.3 10 L13.5 6.6 M20.1 6.6 L24.6 10" stroke="#f2f2f2" stroke-width="1.9"/><circle cx="16.9" cy="4.1" r="3" fill="#f2f2f2"/>
<path d="M0 12.2 L34 12.2 L34 37.1 L0 37.1Z M3.9 16.5 L3.9 33.2 L29.9 33.2 L29.9 16.5Z" fill="#f2f2f2" fill-rule="evenodd"/>
<path d="M7.7 31.1 L14.4 24.4 L16.2 25.9 L20.3 20.8 L27.3 31.1Z" fill="#f2f2f2"/><circle cx="10.1" cy="20.6" r="2.5" fill="#f2f2f2"/></svg>
<div style="position:absolute;left:452.85px;top:391.00px;width:380px;text-align:center;font-size:18.6px;line-height:22.32px;color:#1b1b1b;font-weight:700;white-space:nowrap;transform-origin:50% 0;">Lorem ipsum dolor sit amet</div>
<div style="position:absolute;left:296px;top:184px;width:693px;height:267px;overflow:hidden">
<div style="position:absolute;left:146.5px;top:239.09px;width:400px;text-align:center;font-size:10.7px;line-height:12px;color:#333;white-space:nowrap">Lorem ipsum dolor sit amet, consectetur adipiscing elit. Praesent quis nisl in</div>
<div style="position:absolute;left:146.5px;top:250.99px;width:400px;text-align:center;font-size:10.7px;line-height:12px;color:#333;white-space:nowrap">turpis sodales luctus aliquet at quam. Fusce quis enim placerat lectus mattis</div>
<div style="position:absolute;left:146.5px;top:262.89px;width:400px;text-align:center;font-size:10.7px;line-height:12px;color:#333;white-space:nowrap">consectetur a vel justo. Class aptent taciti sociosqu ad litora torquent per</div>
</div>
<div style="position:absolute;left:296px;top:451px;width:728px;height:261px;background:#fff"></div>
<div style="position:absolute;left:0px;top:712px;width:1024px;height:11px;background:#f7f7f7"></div>
<div style="position:absolute;left:12px;top:712px;width:989px;height:1px;background:#ececec"></div>
<div style="position:absolute;left:1013px;top:712px;width:11px;height:11px;background:#f0f0f0"></div>
<svg style="position:absolute;left:1015.5px;top:715px;overflow:visible;" width="6" height="4" viewBox="0 0 6 4"><path d="M0 0 L6 0 L3 3.5Z" fill="#505050"/></svg>
</body></html>
